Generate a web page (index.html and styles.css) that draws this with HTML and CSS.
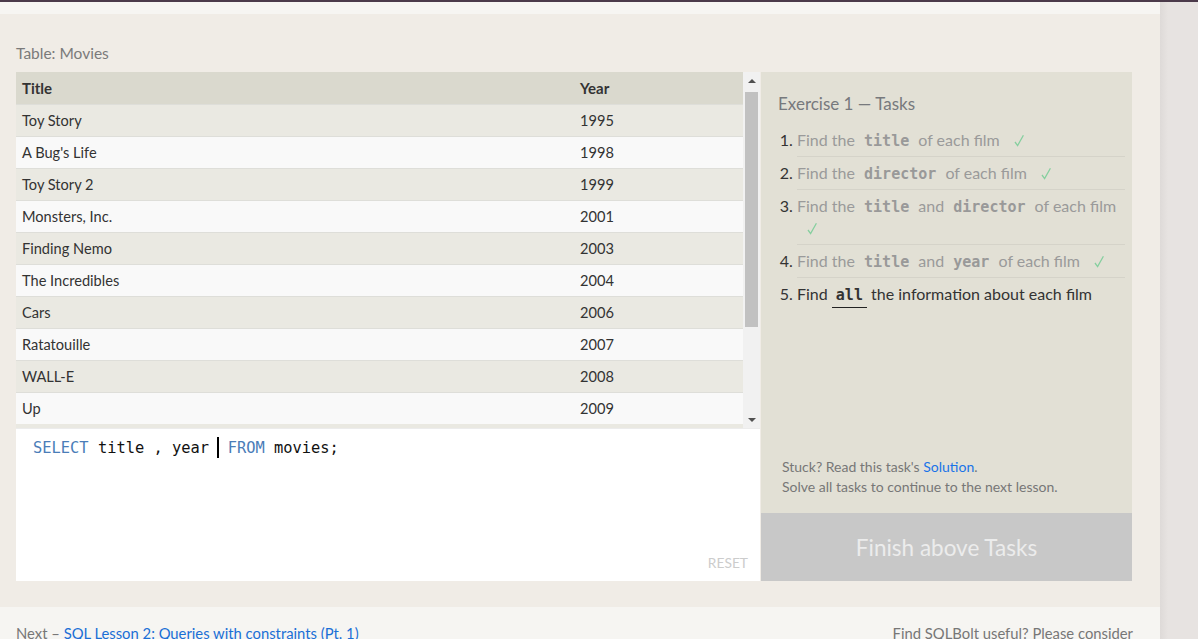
FILE: index.html
```html
<!DOCTYPE html>
<html>
<head>
<meta charset="utf-8">
<link rel="stylesheet" href="styles.css">
</head>
<body>
<div class="topbar"></div>
<div class="layout">
  <div class="page">
    <section class="lesson">
      <div class="table-label">Table: Movies</div>
      <div class="exercise">
        <div class="left-col">
          <div class="table-box">
            <div class="table-scroll">
              <table class="movies">
                <thead>
                  <tr><th class="c-title">Title</th><th class="c-year">Year</th></tr>
                </thead>
                <tbody>
                  <tr><td>Toy Story</td><td>1995</td></tr>
                  <tr><td>A Bug's Life</td><td>1998</td></tr>
                  <tr><td>Toy Story 2</td><td>1999</td></tr>
                  <tr><td>Monsters, Inc.</td><td>2001</td></tr>
                  <tr><td>Finding Nemo</td><td>2003</td></tr>
                  <tr><td>The Incredibles</td><td>2004</td></tr>
                  <tr><td>Cars</td><td>2006</td></tr>
                  <tr><td>Ratatouille</td><td>2007</td></tr>
                  <tr><td>WALL-E</td><td>2008</td></tr>
                  <tr><td>Up</td><td>2009</td></tr>
                </tbody>
              </table>
            </div>
            <div class="scrollbar">
              <div class="sb-btn"><span class="arrow-up"></span></div>
              <div class="sb-track"><div class="sb-thumb"></div></div>
              <div class="sb-btn"><span class="arrow-down"></span></div>
            </div>
          </div>
          <div class="editor">
            <div class="code"><span class="kw">SELECT</span> title , year <span class="cursor"></span> <span class="kw">FROM</span> movies;</div>
            <div class="reset">RESET</div>
          </div>
        </div>
        <aside class="tasks">
          <div class="tasks-body">
            <h3 class="tasks-title">Exercise 1 — Tasks</h3>
            <ol class="task-list">
              <li class="done"><span class="txt">Find the <code>title</code> of each film</span> <svg class="check" viewBox="0 0 10 13" width="10" height="13"><polyline points="1,8 3.6,11.6 9.4,1.2"/></svg></li>
              <li class="done"><span class="txt">Find the <code>director</code> of each film</span> <svg class="check" viewBox="0 0 10 13" width="10" height="13"><polyline points="1,8 3.6,11.6 9.4,1.2"/></svg></li>
              <li class="done"><span class="txt">Find the <code>title</code> and <code>director</code> of each film</span> <svg class="check" viewBox="0 0 10 13" width="10" height="13"><polyline points="1,8 3.6,11.6 9.4,1.2"/></svg></li>
              <li class="done"><span class="txt">Find the <code>title</code> and <code>year</code> of each film</span> <svg class="check" viewBox="0 0 10 13" width="10" height="13"><polyline points="1,8 3.6,11.6 9.4,1.2"/></svg></li>
              <li class="current"><span class="txt">Find <code class="hl">all</code> the information about each film</span></li>
            </ol>
            <div class="stuck">
              <div>Stuck? Read this task's <a href="#">Solution</a>.</div>
              <div>Solve all tasks to continue to the next lesson.</div>
            </div>
          </div>
          <div class="finish">Finish above Tasks</div>
        </aside>
      </div>
    </section>
    <footer class="footer">
      <div class="next">Next – <a href="#">SQL Lesson 2: Queries with constraints (Pt. 1)</a></div>
      <div class="useful">Find SQLBolt useful? Please consider</div>
    </footer>
  </div>
  <div class="gutter"></div>
</div>
</body>
</html>
```
FILE: styles.css
```css
* { box-sizing: border-box; }
html, body { margin: 0; padding: 0; }
body {
  background: #e7e3e1;
  font-family: "Lato", "Open Sans", sans-serif;
  color: #333;
  height: 639px;
  overflow: hidden;
}
.topbar { height: 2px; background: #4b3a4a; }
.layout { display: flex; }
.page {
  width: 1160px;
  background: #f6f5f2;
  padding-top: 12px;
}
.gutter {
  flex: 1;
  background: linear-gradient(to right, #dedad8, #e7e3e1 8px, #e7e3e1);
  height: 637px;
}
.lesson {
  background: #f0ece6;
  padding: 29px 28px 26px 16px;
}
.table-label {
  font-size: 15.5px;
  color: #7a7a7a;
  line-height: 20px;
  height: 29px;
}
.exercise { display: flex; gap: 1px; }
.left-col { width: 744px; display: flex; flex-direction: column; }
.table-box { display: flex; height: 356px; }
.table-scroll { flex: 1; overflow: hidden; background: #eae9e2; }
.movies {
  width: 100%;
  border-collapse: collapse;
  font-size: 14.6px;
}
.movies th, .movies td {
  height: 32px;
  padding: 0 6px;
  text-align: left;
  vertical-align: middle;
}
.movies th { background: #dad9ce; font-weight: bold; color: #333; font-size: 15px; }
.c-title { width: 558px; }
.movies tbody tr { border-top: 1px solid #deded9; }
.movies tbody tr:nth-child(odd) { background: #eae9e2; }
.movies tbody tr:nth-child(even) { background: #f9f9f9; }
.scrollbar {
  width: 17px;
  background: #f1f1f1;
  display: flex;
  flex-direction: column;
}
.sb-btn { height: 17px; display: flex; align-items: center; justify-content: center; }
.arrow-up { width: 0; height: 0; border-left: 4px solid transparent; border-right: 4px solid transparent; border-bottom: 4px solid #505050; }
.arrow-down { width: 0; height: 0; border-left: 4px solid transparent; border-right: 4px solid transparent; border-top: 4px solid #505050; }
.sb-track { flex: 1; padding: 3px 2px 0 2px; }
.sb-thumb { height: 235px; background: #c1c1c1; }
.editor {
  background: #fff;
  height: 153px;
  border-top: 1px solid #ececec;
  display: flex;
  flex-direction: column;
  justify-content: space-between;
  padding: 8px 12px 10px 17px;
}
.code {
  font-family: "DejaVu Sans Mono", "Liberation Mono", monospace;
  font-size: 15.4px;
  line-height: 20px;
  color: #111;
  white-space: pre;
}
.kw { color: #4a7db8; }
.cursor {
  display: inline-block;
  width: 0;
  height: 21px;
  border-left: 2px solid #000;
  margin-left: -1px;
  margin-right: -1px;
  vertical-align: -5px;
}
.reset {
  align-self: flex-end;
  font-size: 13.8px;
  color: #cccccc;
}
.tasks {
  width: 371px;
  display: flex;
  flex-direction: column;
  background: #e2e0d5;
}
.tasks-body {
  flex: 1;
  padding: 22px 7px 16px 17px;
  display: flex;
  flex-direction: column;
}
.tasks-title {
  margin: 0 0 10px 0;
  font-size: 17px;
  font-weight: normal;
  color: #77797d;
  line-height: 20px;
}
.task-list {
  margin: 0;
  padding-left: 19px;
  font-size: 16px;
  flex: 1;
}
.task-list li {
  line-height: 22px;
  padding: 5px 0;
  border-bottom: 1px solid #d5d3c9;
  color: #333;
}
.task-list li:last-child { border-bottom: none; }
.task-list li.done .txt { color: #9a9a9a; }
.task-list code {
  font-family: "DejaVu Sans Mono", "Liberation Mono", monospace;
  font-weight: bold;
  font-size: 15px;
  line-height: 1;
  padding: 0 5px;
}
.task-list li.done code { color: #999; }
.task-list code.hl { color: #333; border-bottom: 1px solid #222; padding: 0 4px 3px; }
.check {
  fill: none;
  stroke: #86cf9f;
  stroke-width: 1.3;
  margin-left: 10px;
  vertical-align: -1px;
}
.stuck {
  font-size: 14px;
  line-height: 20px;
  color: #777;
  padding-left: 4px;
}
.stuck a { color: #1a73e8; text-decoration: none; }
.finish {
  height: 68px;
  background: #c8c8c8;
  color: #ececec;
  font-size: 22.5px;
  display: flex;
  align-items: center;
  justify-content: center;
}
.footer {
  display: flex;
  justify-content: space-between;
  padding: 16px 27px 0 16px;
  font-size: 14.8px;
  color: #777;
  line-height: 20px;
}
.footer a { color: #1a6fd6; text-decoration: none; }
```
